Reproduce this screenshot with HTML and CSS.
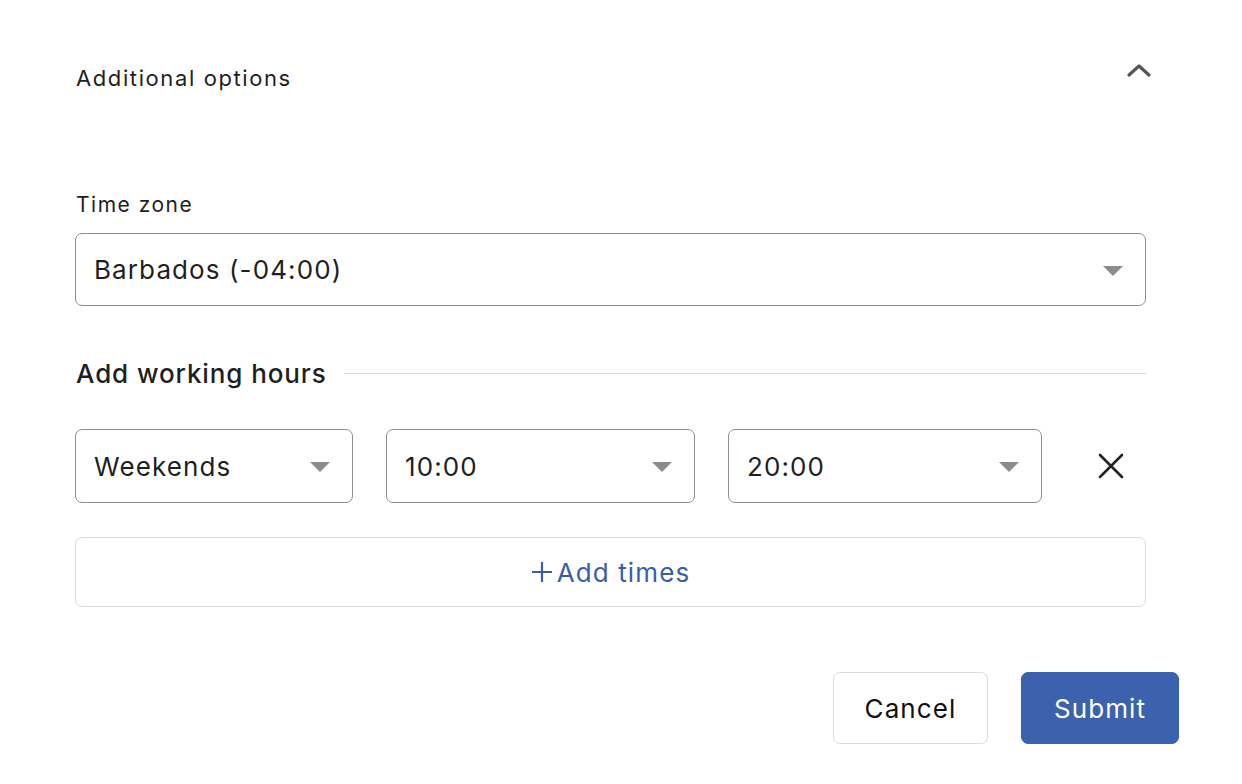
FILE: index.html
```html
<!DOCTYPE html>
<html lang="en">
<head>
<meta charset="utf-8">
<title>Additional options</title>
<link rel="stylesheet" href="styles.css">
</head>
<body>
<div class="page">
  <div class="form">
    <div class="header">
      <span class="header-title">Additional options</span>
      <svg class="chevron" width="26" height="18" viewBox="0 0 26 18"><path d="M3 13 L13 4 L23 13" fill="none" stroke="#555" stroke-width="3.2" stroke-linecap="round" stroke-linejoin="round"/></svg>
    </div>

    <label class="field-label">Time zone</label>
    <div class="select select-full">
      <span class="select-text">Barbados (-04:00)</span>
      <span class="caret"></span>
    </div>

    <div class="section-heading">
      <span class="section-title">Add working hours</span>
      <span class="section-line"></span>
    </div>

    <div class="hours-row">
      <div class="select select-day">
        <span class="select-text">Weekends</span>
        <span class="caret"></span>
      </div>
      <div class="select select-from">
        <span class="select-text">10:00</span>
        <span class="caret"></span>
      </div>
      <div class="select select-to">
        <span class="select-text">20:00</span>
        <span class="caret"></span>
      </div>
      <svg class="remove" width="26" height="26" viewBox="0 0 26 26"><path d="M2 2 L24 24 M24 2 L2 24" stroke="#222" stroke-width="2.6" stroke-linecap="round"/></svg>
    </div>

    <button class="add-times"><svg class="plus" width="22" height="22" viewBox="0 0 22 22"><path d="M11 1 V21 M1 11 H21" stroke="#3a5ea6" stroke-width="2.2"/></svg>Add times</button>
  </div>

  <div class="footer">
    <button class="btn btn-cancel">Cancel</button>
    <button class="btn btn-submit">Submit</button>
  </div>
</div>
</body>
</html>
```

FILE: styles.css
```css
html, body {
  margin: 0;
  padding: 0;
  background: #ffffff;
}

body {
  font-family: Inter, "Liberation Sans", Arial, sans-serif;
  color: #1f1f1f;
}

.page {
  width: 1104px;
  padding-left: 75px;
  padding-top: 58px;
}

.form {
  width: 1071px;
  display: flex;
  flex-direction: column;
}

.header {
  display: flex;
  justify-content: space-between;
  align-items: flex-start;
  height: 40px;
}

.header-title {
  font-size: 22px;
  line-height: 40px;
  letter-spacing: 1.6px;
  padding-left: 1px;
}

.chevron {
  margin-top: 4px;
  margin-right: -6px;
}

.field-label {
  margin-top: 92px;
  font-size: 21px;
  line-height: 30px;
  letter-spacing: 1.5px;
  padding-left: 1px;
}

.select {
  box-sizing: border-box;
  height: 74px;
  border: 1.5px solid #8f8f8f;
  border-radius: 7px;
  display: flex;
  align-items: center;
  justify-content: space-between;
  padding: 0 22px 0 18px;
  background: #fff;
}

.select-full {
  margin-top: 13px;
  height: 73px;
}

.select-text {
  font-size: 26px;
  letter-spacing: 1.1px;
  color: #1f1f1f;
}

.caret {
  width: 0;
  height: 0;
  border-left: 10px solid transparent;
  border-right: 10px solid transparent;
  border-top: 10px solid #8c8c8c;
  margin-top: 2px;
}

.section-heading {
  margin-top: 47px;
  height: 40px;
  display: flex;
  align-items: center;
  gap: 17px;
}

.section-title {
  font-size: 26px;
  font-weight: 500;
  letter-spacing: 0.9px;
  padding-left: 1px;
  white-space: nowrap;
}

.section-line {
  flex: 1;
  height: 1px;
  background: #d9d9d9;
}

.hours-row {
  margin-top: 36px;
  display: flex;
  align-items: center;
  gap: 33px;
}

.select-day { width: 278px; }
.select-from { width: 309px; }
.select-to { width: 314px; }

.remove {
  margin-left: 23px;
}

.add-times {
  margin-top: 34px;
  box-sizing: border-box;
  height: 70px;
  width: 100%;
  border: 1.5px solid #dcdcdc;
  border-radius: 7px;
  background: #fff;
  color: #3a5ea6;
  font-family: inherit;
  font-size: 26px;
  letter-spacing: 1.1px;
  display: flex;
  align-items: center;
  justify-content: center;
  cursor: pointer;
}

.plus {
  margin-right: 4px;
  margin-top: -1px;
}

.footer {
  margin-top: 65px;
  display: flex;
  justify-content: flex-end;
  gap: 33px;
}

.btn {
  box-sizing: border-box;
  height: 72px;
  border-radius: 7px;
  font-family: inherit;
  font-size: 26px;
  letter-spacing: 1.1px;
  cursor: pointer;
}

.btn-cancel {
  width: 155px;
  background: #fff;
  border: 1.5px solid #dcdcdc;
  color: #111;
}

.btn-submit {
  width: 158px;
  background: #3c62ad;
  border: 1.5px solid #3c62ad;
  color: #fff;
}
```
